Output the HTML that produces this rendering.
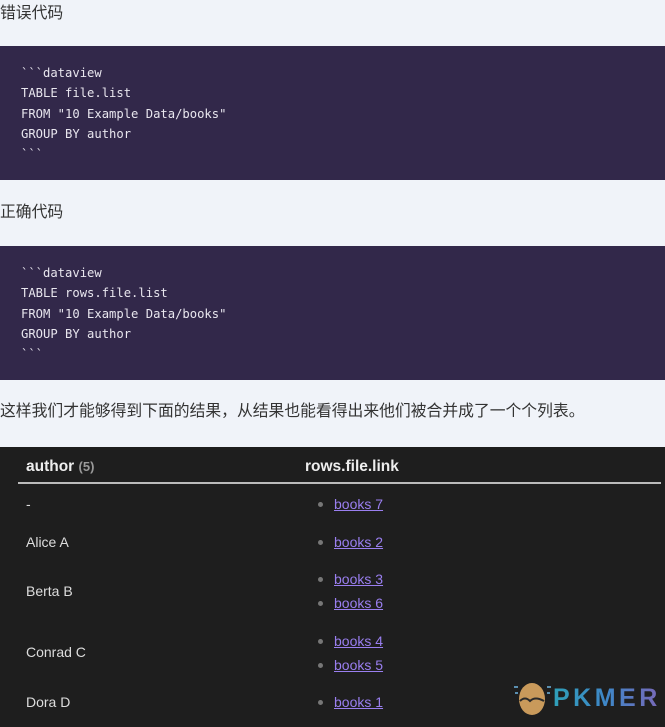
<!DOCTYPE html>
<html><head><meta charset="utf-8"><style>
*{margin:0;padding:0;box-sizing:border-box}
body{width:665px;height:727px;background:#f0f3f9;font-family:"Liberation Sans","Noto Sans CJK SC",sans-serif;color:#333;overflow:hidden;position:relative}
.t{position:absolute;left:0;font-size:15.8px;line-height:20px}
.code{position:absolute;left:0;width:665px;height:134px;background:#32284a;color:#e8e6ee;font-family:"DejaVu Sans Mono","Liberation Mono",monospace;font-size:12.2px;line-height:20.3px;padding:17px 21px;white-space:pre}
.tbl{position:absolute;left:0;top:447px;width:665px;height:280px;background:#1e1e1e;color:#ddd;font-size:14px}
.a{position:absolute;left:26px;line-height:20px}
.l{position:absolute;left:334px;color:#9a7ff0;text-decoration:underline;line-height:20px}
.b{position:absolute;left:318px;width:5px;height:5px;border-radius:50%;background:#777}
</style></head><body>
<div class="t" style="top:4px">错误代码</div>
<div class="code" style="top:46px">&#96;&#96;&#96;dataview
TABLE file.list
FROM "10 Example Data/books"
GROUP BY author
&#96;&#96;&#96;</div>
<div class="t" style="top:203px">正确代码</div>
<div class="code" style="top:246px">&#96;&#96;&#96;dataview
TABLE rows.file.list
FROM "10 Example Data/books"
GROUP BY author
&#96;&#96;&#96;</div>
<div class="t" style="top:402px">这样我们才能够得到下面的结果，从结果也能看得出来他们被合并成了一个个列表。</div>
<div class="tbl">
<div style="position:absolute;left:26px;top:11px;font-weight:bold;font-size:15.5px;color:#eee">author <span style="color:#999;font-size:13px">(5)</span></div>
<div style="position:absolute;left:305px;top:11px;font-weight:bold;font-size:15.5px;color:#eee">rows.file.link</div>
<div style="position:absolute;left:18px;top:35px;width:643px;height:2px;background:#bbb"></div>
<div class="a" style="top:47px">-</div>
<div class="a" style="top:85px">Alice A</div>
<div class="a" style="top:134px">Berta B</div>
<div class="a" style="top:195px">Conrad C</div>
<div class="a" style="top:245px">Dora D</div>
<div class="b" style="top:55px"></div><div class="l" style="top:47px">books 7</div>
<div class="b" style="top:93px"></div><div class="l" style="top:85px">books 2</div>
<div class="b" style="top:130px"></div><div class="l" style="top:122px">books 3</div>
<div class="b" style="top:154px"></div><div class="l" style="top:146px">books 6</div>
<div class="b" style="top:192px"></div><div class="l" style="top:184px">books 4</div>
<div class="b" style="top:216px"></div><div class="l" style="top:208px">books 5</div>
<div class="b" style="top:253px"></div><div class="l" style="top:245px">books 1</div>
<svg style="position:absolute;left:512px;top:233px" width="40" height="38" viewBox="0 0 40 38">
<ellipse cx="20" cy="19" rx="13" ry="16" fill="#c99a5b"/>
<path d="M8 21 q5 -5 10 0 q5 -5 14 0" stroke="#2a2a2a" stroke-width="2" fill="none"/>
<rect x="2" y="6" width="4" height="2" fill="#5a8fb0"/><rect x="3" y="12" width="3" height="2" fill="#5a8fb0"/>
<rect x="35" y="6" width="4" height="2" fill="#5a8fb0"/><rect x="35" y="12" width="3" height="2" fill="#5a8fb0"/>
</svg>
<div style="position:absolute;left:553px;top:237px;font-size:25px;font-weight:bold;letter-spacing:3.5px;background:linear-gradient(90deg,#2f9fb8,#3f86c8,#7a68b8);-webkit-background-clip:text;color:transparent">PKMER</div>
</div>
</body></html>
